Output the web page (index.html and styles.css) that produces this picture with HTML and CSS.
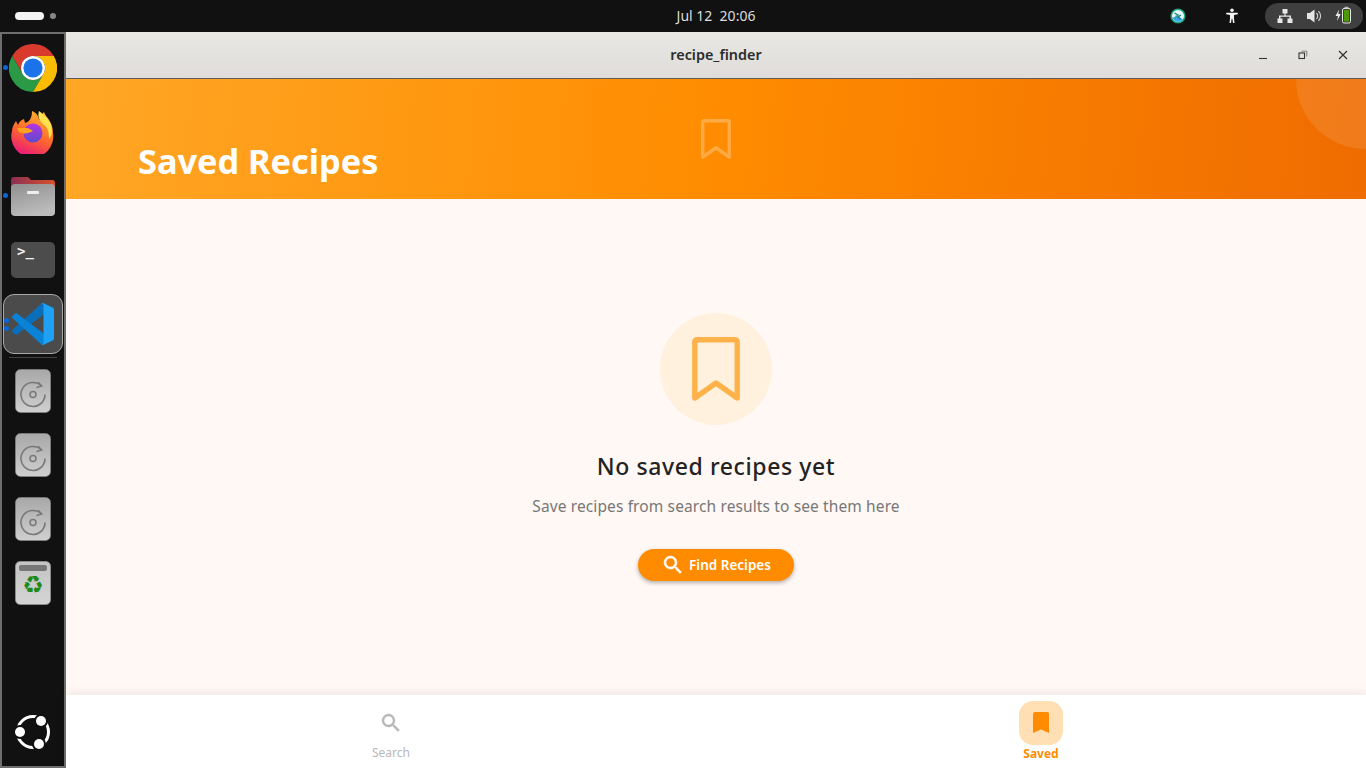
FILE: index.html
```html
<!DOCTYPE html>
<html lang="en">

<head>
  <meta charset="UTF-8">
  <meta name="viewport" content="width=device-width, initial-scale=1.0">
  <title>recipe_finder</title>

  <link rel="stylesheet" href="styles.css">
</head>

<body>
  <svg class="defs" width="0" height="0">
    <symbol id="bookmark-line" viewBox="0 0 48 64">
      <path d="M5 2.8H43a2.2 2.2 0 0 1 2.2 2.2V61L24 46 2.8 61V5A2.2 2.2 0 0 1 5 2.8Z" fill="none" stroke="currentColor" stroke-width="5.4" stroke-linejoin="round" />
    </symbol>
    <symbol id="search" viewBox="0 0 24 24">
      <path d="M15.5 14h-.79l-.28-.27A6.47 6.47 0 0 0 16 9.5 6.5 6.5 0 1 0 9.5 16c1.61 0 3.09-.59 4.23-1.57l.27.28v.79l5 4.99L20.49 19l-4.99-5zm-6 0C7.01 14 5 11.99 5 9.5S7.01 5 9.5 5 14 7.01 14 9.5 11.99 14 9.5 14z" fill="currentColor" stroke="currentColor" stroke-width="0.5" />
    </symbol>
    <linearGradient id="disc-bg" x1="0" y1="0" x2="0" y2="1">
      <stop offset="0" stop-color="#a8a8a8" />
      <stop offset="1" stop-color="#cfcfcf" />
    </linearGradient>
    <symbol id="disc" viewBox="0 0 36 44">
      <rect x="0.5" y="0.5" width="35" height="43" rx="5" fill="url(#disc-bg)" stroke="#8c8c8c" stroke-width="0.6" />
      <path d="M26.500 17A12 12 0 1 0 30 25.500" fill="none" stroke="#787878" stroke-width="1.6" />
      <path d="M23 13 27 17 21.500 18.500" fill="none" stroke="#787878" stroke-width="1.3" />
      <circle cx="18" cy="25.500" r="3" fill="none" stroke="#787878" stroke-width="1.5" />
    </symbol>
  </svg>

  <div class="topbar">
    <div class="activities">
      <span class="activity-pill"></span>
      <span class="activity-dot"></span>
    </div>
    <div class="clock">Jul 12&nbsp;&nbsp;20:06</div>
    <div class="tray">
      <svg class="tray-app" width="16" height="16" viewBox="0 0 16 16">
        <circle cx="8" cy="8" r="7.6" fill="#1fa37a" />
        <circle cx="8" cy="8" r="6" fill="#e8f6fb" />
        <path d="M2.5 9.5A6 6 0 0 0 13 11.5L8 8Z" fill="#38a7e8" />
        <path d="M4.5 5 8 7 5.5 8.5M11 7 8 9 10.5 11" fill="none" stroke="#14806a" stroke-width="1.3" />
      </svg>
      <svg class="tray-access" width="16" height="16" viewBox="0 0 16 16">
        <circle cx="8" cy="2.2" r="1.8" fill="#f2f2f2" />
        <path d="M2.2 4.800H13.800V6.300L10 7V10.500L10.500 15H9L8.300 10.800H7.700L7 15H5.500L6 10.500V7L2.200 6.300Z" fill="#f2f2f2" />
      </svg>
      <div class="tray-pill">
        <svg width="16" height="16" viewBox="0 0 16 16">
          <path d="M5.500 1h5v4.500H8.600V7.400H14v3h1.500V15h-5v-4.600h2V8.700H3.500v1.700h2V15h-5v-4.600H2V7.400h5.400V5.500H5.500Z" fill="#e8e8e8" />
        </svg>
        <svg width="16" height="16" viewBox="0 0 16 16">
          <path d="M1 5h2.800L8.500 1.500v13L3.800 11H1Z" fill="#e4e4e4" />
          <path d="M10.500 5a4.200 4.200 0 0 1 0 6M12.500 3.200a6.600 6.600 0 0 1 0 9.600" fill="none" stroke="#d4d4d4" stroke-width="1.1" />
        </svg>
        <svg class="tray-battery" width="16" height="18" viewBox="0 0 16 18">
          <path d="M4.200 3.500 0.500 10H3L2 15l3.700-7H3.200Z" fill="#eee" />
          <rect x="7.500" y="2.500" width="8" height="14.500" rx="1.500" fill="none" stroke="#e6e6e6" stroke-width="1" />
          <rect x="9.500" y="0.800" width="4" height="1.600" fill="#bbb" />
          <rect x="9" y="4" width="5" height="11.500" fill="#4e9a06" />
        </svg>
      </div>
    </div>
  </div>

  <div class="desktop">
    <nav class="dock">
      <div class="dock-item running">
        <svg width="48" height="48" viewBox="0 0 48 48">
          <path d="M3.200 12A24 24 0 0 1 44.800 12H24A12 12 0 0 0 13.600 30Z" fill="#d93a2e" />
          <path d="M3.200 12A24 24 0 0 0 24 48L34.400 30A12 12 0 0 1 13.600 30Z" fill="#2a9a46" />
          <path d="M44.800 12A24 24 0 0 1 24 48L34.400 30A12 12 0 0 0 24 12Z" fill="#fbbc04" />
          <circle cx="24" cy="24" r="12" fill="#fff" />
          <circle cx="24" cy="24" r="9.6" fill="#1a73e8" />
        </svg>
      </div>
      <div class="dock-item">
        <svg width="44" height="44" viewBox="0 0 44 44">
          <defs>
            <linearGradient id="fx-base" x1="0.7" y1="0" x2="0.3" y2="1">
              <stop offset="0" stop-color="#ffb52e" />
              <stop offset="0.5" stop-color="#ff6a2b" />
              <stop offset="1" stop-color="#e8127f" />
            </linearGradient>
            <linearGradient id="fx-ball" x1="0.5" y1="0" x2="0.5" y2="1">
              <stop offset="0" stop-color="#b833e1" />
              <stop offset="1" stop-color="#5b4ad0" />
            </linearGradient>
          </defs>
          <path d="M21 1C30 5 25 9 31 11 29 6 32 3 33 2c2 6 9 9 9 21A21 21 0 1 1 1 21C1 17 3 14 5 11L7 15c1-3 3-5 6-6l1 4c3-1 7-3 7-12Z" fill="url(#fx-base)" />
          <path d="M28 1c5 4 13 9 13 20 0 3-1 6-3 8 0-9-2-12-6-15-3-3-6-7-4-13Z" fill="#ffe14f" />
          <circle cx="22" cy="23" r="9.5" fill="url(#fx-ball)" />
          <path d="M6 18h11l5 3c-5 3-11 3-14 1Z" fill="#ffa21f" />
        </svg>
      </div>
      <div class="dock-item running">
        <svg width="44" height="42" viewBox="0 0 44 42">
          <defs>
            <linearGradient id="folder-back" x1="0" y1="0" x2="1" y2="0">
              <stop offset="0" stop-color="#8a2f52" />
              <stop offset="1" stop-color="#d9522c" />
            </linearGradient>
            <linearGradient id="folder-front" x1="0" y1="0" x2="0.4" y2="1">
              <stop offset="0" stop-color="#8f8f8f" />
              <stop offset="1" stop-color="#bcbcbc" />
            </linearGradient>
          </defs>
          <path d="M0 5a3 3 0 0 1 3-3H17l3 3H41a3 3 0 0 1 3 3V20H0Z" fill="url(#folder-back)" />
          <rect y="9" width="44" height="32" rx="4" fill="url(#folder-front)" />
          <rect x="16" y="16" width="12" height="3" rx="1" fill="#eee" />
        </svg>
      </div>
      <div class="dock-item">
        <div class="terminal-icon">&gt;_</div>
      </div>
      <div class="dock-item focused running-two">
        <svg width="42" height="42" viewBox="0 0 100 100">
          <path d="M96.500 10.800 75.900.900c-2.400-1.200-5.300-.7-7.100 1.200L1.400 63.600c-1.800 1.600-1.800 4.500 0 6.100l5.500 5c1.500 1.400 3.700 1.500 5.300.2L93.400 13.600c2.700-2.100 6.600-.1 6.600 3.300v-.3c0-2.400-1.400-4.800-3.500-5.800Z" fill="#0a6fb8" />
          <path d="M96.500 89.200 75.900 99.100c-2.400 1.200-5.300.7-7.100-1.200L1.400 36.400c-1.800-1.600-1.800-4.500 0-6.100l5.500-5c1.500-1.400 3.700-1.500 5.300-.2l81.200 61.300c2.700 2.100 6.600.1 6.600-3.300v.3c0 2.400-1.400 4.800-3.500 5.800Z" fill="#0a82d6" />
          <path d="M75.900 99.100c-2.400 1.200-5.300.7-7.100-1.200 2.300 2.300 6.200.7 6.200-2.600V4.700c0-3.300-3.900-4.900-6.200-2.600 1.800-1.900 4.700-2.400 7.100-1.200l20.600 9.900c2.200 1 3.500 3.200 3.500 5.600v67.200c0 2.400-1.400 4.600-3.500 5.600Z" fill="#1fa2f5" />
        </svg>
      </div>
      <div class="dock-sep"></div>
      <div class="dock-item"><svg width="36" height="44"><use href="#disc" /></svg></div>
      <div class="dock-item"><svg width="36" height="44"><use href="#disc" /></svg></div>
      <div class="dock-item"><svg width="36" height="44"><use href="#disc" /></svg></div>
      <div class="dock-item">
        <div class="trash-icon">
          <div class="trash-bar"></div>
          <div class="trash-glyph">♻</div>
        </div>
      </div>
      <div class="dock-item dock-bottom">
        <svg width="38" height="36" viewBox="0 0 38 36">
          <circle cx="19" cy="18" r="15.500" fill="none" stroke="#fff" stroke-width="3" />
          <circle cx="6" cy="18" r="7" fill="#111" />
          <circle cx="27" cy="7" r="7" fill="#111" />
          <circle cx="25" cy="30" r="7" fill="#111" />
          <circle cx="6" cy="18" r="5" fill="#fff" />
          <circle cx="27" cy="7" r="5" fill="#fff" />
          <circle cx="25" cy="30" r="5" fill="#fff" />
        </svg>
      </div>
    </nav>

    <div class="window">
      <div class="titlebar">
        <div></div>
        <div class="win-title">recipe_finder</div>
        <div class="win-controls">
          <div class="win-btn">
            <svg width="10" height="10" viewBox="0 0 10 10"><path d="M1 8.500H9" stroke="#333" stroke-width="1.100" /></svg>
          </div>
          <div class="win-btn">
            <svg width="10" height="10" viewBox="0 0 10 10">
              <rect x="1" y="3" width="5.500" height="5.500" fill="none" stroke="#333" stroke-width="1.100" />
              <path d="M3.500 1.200H8.800V6.500" fill="none" stroke="#666" stroke-width="0.800" />
            </svg>
          </div>
          <div class="win-btn">
            <svg width="10" height="10" viewBox="0 0 10 10"><path d="M1 1 9 9M9 1 1 9" stroke="#333" stroke-width="1.200" /></svg>
          </div>
        </div>
      </div>

      <header class="app-header">
        <div class="header-circle"></div>
        <svg class="header-mark" width="30" height="40"><use href="#bookmark-line" /></svg>
        <h1 class="header-title">Saved Recipes</h1>
      </header>

      <main class="empty">
        <div class="empty-badge">
          <svg width="48" height="64"><use href="#bookmark-line" /></svg>
        </div>
        <h2 class="empty-title">No saved recipes yet</h2>
        <p class="empty-text">Save recipes from search results to see them here</p>
        <button class="find-btn">
          <svg width="24" height="24"><use href="#search" /></svg>
          Find Recipes
        </button>
      </main>

      <footer class="bottom-nav">
        <div class="nav-item">
          <div class="nav-icon">
            <svg width="24" height="24"><use href="#search" /></svg>
          </div>
          <div class="nav-label">Search</div>
        </div>
        <div class="nav-item active">
          <div class="nav-icon">
            <svg width="24" height="24" viewBox="0 0 24 24"><path d="M6 1h12a2 2 0 0 1 2 2V22l-8-3.500L4 22V3a2 2 0 0 1 2-2Z" fill="currentColor" /></svg>
          </div>
          <div class="nav-label">Saved</div>
        </div>
      </footer>
    </div>
  </div>
</body>

</html>
```

FILE: styles.css
```css
* {
  box-sizing: border-box;
}

body {
  margin: 0;
  width: 1366px;
  height: 768px;
  overflow: hidden;
  display: flex;
  flex-direction: column;
  background: #111;
  font-family: "Noto Sans", "Open Sans", sans-serif;
}

.defs {
  position: absolute;
}

/* top panel */
.topbar {
  height: 32px;
  flex: none;
  display: flex;
  align-items: center;
  background: #111;
  color: #ddd;
}

.activities {
  width: 676px;
  padding-left: 15px;
  display: flex;
  align-items: center;
  gap: 6px;
}

.activity-pill {
  width: 29px;
  height: 8px;
  border-radius: 4px;
  background: #f4f4f4;
}

.activity-dot {
  width: 6px;
  height: 6px;
  border-radius: 50%;
  background: #888;
}

.clock {
  width: 80px;
  padding-bottom: 2px;
  text-align: center;
  white-space: nowrap;
  font-size: 14px;
}

.tray {
  margin-left: auto;
  margin-right: 3px;
  display: flex;
  align-items: center;
}

.tray-access {
  margin-left: 38px;
  margin-right: 25px;
}

.tray-pill {
  width: 98px;
  height: 26px;
  padding: 0 12px;
  border-radius: 13px;
  background: #3f3f3f;
  display: flex;
  align-items: center;
  gap: 13px;
}

.tray-battery {
  margin-bottom: 2px;
}

/* dock */
.desktop {
  flex: 1;
  display: flex;
  min-height: 0;
}

.dock {
  width: 66px;
  flex: none;
  padding: 2px 0;
  display: flex;
  flex-direction: column;
  background: #111;
  border: 2px solid #6e6e6e;
}

.dock-item {
  position: relative;
  height: 64px;
  flex: none;
  display: flex;
  align-items: center;
  justify-content: center;
}

.dock-item.running::before,
.running-two::before,
.running-two::after {
  content: '';
  position: absolute;
  left: 1px;
  top: 29px;
  width: 5px;
  height: 5px;
  border-radius: 50%;
  background: #0b66d8;
}

.running-two::before {
  top: 23px;
}

.running-two::after {
  top: 31px;
}

.dock-item.focused {
  margin: 2px 1px;
  height: 60px;
  border-radius: 11px;
  border: 1px solid #a8a8a8;
  background: #4b4b4b;
}

.focused.running-two::before,
.focused.running-two::after {
  left: 0;
}

.dock-sep {
  height: 1px;
  margin: 1px 7px;
  flex: none;
  background: #444;
}

.dock-bottom {
  margin-top: auto;
}

.terminal-icon {
  width: 44px;
  height: 36px;
  padding: 0 0 0 6px;
  border-radius: 5px;
  background: #4c4c4c;
  color: #f2f2f2;
  font-family: "DejaVu Sans Mono", monospace;
  font-size: 14px;
  font-weight: 700;
  line-height: 18px;
}

.trash-icon {
  width: 36px;
  height: 44px;
  padding: 3px;
  border-radius: 5px;
  background: linear-gradient(#c4c4c4, #d4d4d4);
  border: 1px solid #8c8c8c;
}

.trash-bar {
  height: 6px;
  border-radius: 2px;
  background: #777;
}

.trash-glyph {
  text-align: center;
  color: #1f8a1a;
  font-family: "DejaVu Sans", sans-serif;
  font-size: 24px;
  line-height: 29px;
}

/* app window */
.window {
  flex: 1;
  min-width: 0;
  display: flex;
  flex-direction: column;
  background: #fff8f5;
}

.titlebar {
  height: 47px;
  flex: none;
  display: grid;
  grid-template-columns: 1fr auto 1fr;
  align-items: center;
  background: linear-gradient(#e9e8e4, #dfdcd9);
  border-bottom: 1px solid #5c5c5c;
}

.win-title {
  padding-bottom: 2px;
  font-size: 14.4px;
  font-weight: 600;
  color: #2c2c2c;
}

.win-controls {
  display: flex;
  justify-content: flex-end;
  padding-right: 3px;
}

.win-btn {
  width: 40px;
  height: 40px;
  display: flex;
  align-items: center;
  justify-content: center;
}

.app-header {
  position: relative;
  height: 120px;
  flex: none;
  overflow: hidden;
  padding: 60px 0 0 72px;
  background: linear-gradient(95.3deg, #ffa726 0%, #ff8c00 50%, #ef6c00 100%);
}

.header-circle {
  position: absolute;
  right: -70px;
  top: -70px;
  width: 140px;
  height: 140px;
  border-radius: 50%;
  background: rgba(255, 255, 255, 0.1);
}

.header-mark {
  position: absolute;
  left: 635px;
  top: 40px;
  color: rgba(255, 255, 255, 0.27);
}

.header-title {
  margin: 0;
  color: #fff;
  font-size: 34.3px;
  font-weight: 700;
  line-height: 44px;
}

.empty {
  flex: 1;
  min-height: 0;
  display: flex;
  flex-direction: column;
  align-items: center;
  justify-content: center;
}

.empty-badge {
  width: 112px;
  height: 112px;
  border-radius: 50%;
  background: #fff1de;
  color: #ffb14a;
  display: flex;
  align-items: center;
  justify-content: center;
}

.empty-title {
  margin: 24px 0 0;
  font-size: 23px;
  font-weight: 500;
  line-height: 34px;
  letter-spacing: 0.6px;
  color: #232323;
}

.empty-text {
  margin: 12px 0 0;
  font-size: 15.5px;
  line-height: 22px;
  letter-spacing: 0.12px;
  color: #777;
}

.find-btn {
  margin-top: 32px;
  height: 32px;
  width: 156px;
  padding: 0 0 1px;
  border: 0;
  border-radius: 16px;
  background: #ff8c00;
  color: #fff;
  font-family: inherit;
  font-size: 13.5px;
  font-weight: 600;
  display: flex;
  align-items: center;
  justify-content: center;
  gap: 4px;
  box-shadow: 0 2px 4px rgba(0, 0, 0, 0.3);
}

.bottom-nav {
  position: relative;
  height: 73px;
  flex: none;
  display: flex;
  background: #fff;
  box-shadow: 0 -2px 10px rgba(0, 0, 0, 0.08);
}

.nav-item {
  flex: 1;
  padding-top: 6px;
  display: flex;
  flex-direction: column;
  align-items: center;
  color: #b8b8b8;
}

.nav-icon {
  width: 44px;
  height: 44px;
  border-radius: 14px;
  display: flex;
  align-items: center;
  justify-content: center;
}

.nav-label {
  font-size: 12px;
  line-height: 16px;
}

.nav-item.active {
  color: #ff8c00;
}

.nav-item.active .nav-icon {
  background: #ffdfb3;
}

.nav-item.active .nav-label {
  margin-top: 1px;
  font-weight: 700;
}
```
